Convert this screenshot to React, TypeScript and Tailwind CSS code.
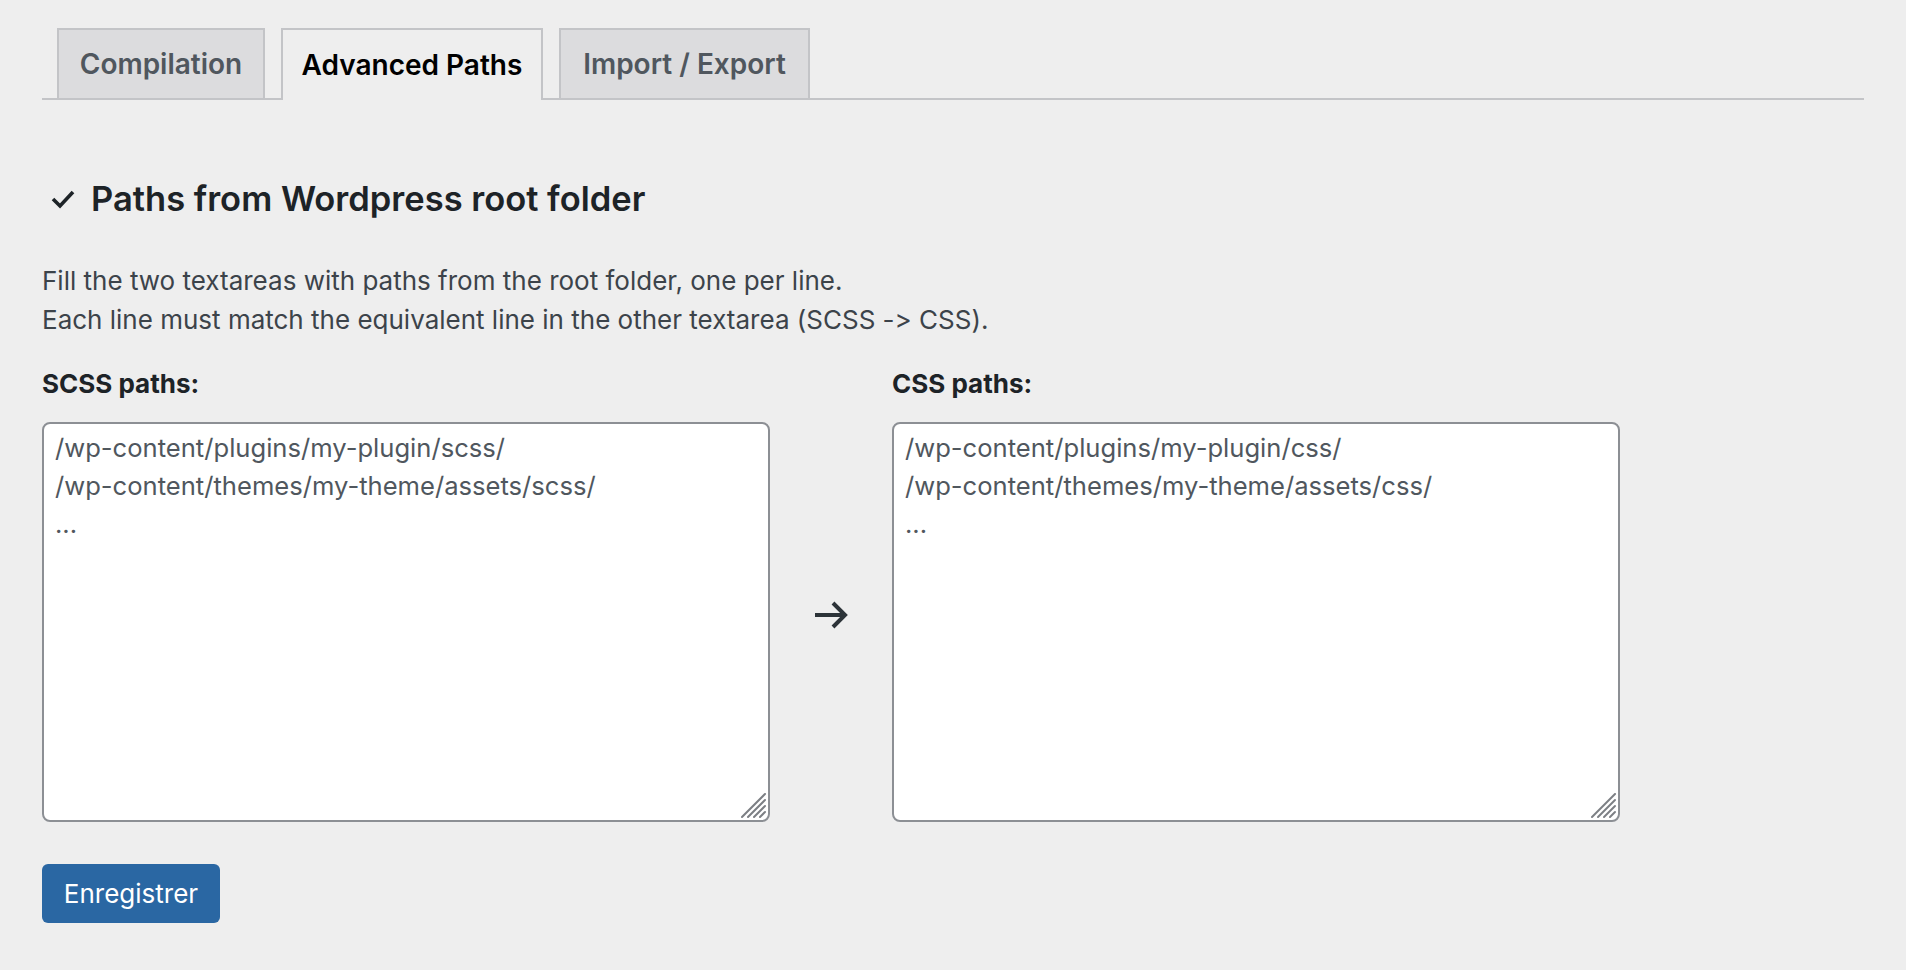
import React from "react";

const tabs = [
  { label: "Compilation", className: "w-[208px]", active: false },
  { label: "Advanced Paths", className: "w-[262px]", active: true },
  { label: "Import / Export", className: "w-[251px]", active: false },
];

const scssPlaceholder =
  "/wp-content/plugins/my-plugin/scss/\n/wp-content/themes/my-theme/assets/scss/\n...";
const cssPlaceholder =
  "/wp-content/plugins/my-plugin/css/\n/wp-content/themes/my-theme/assets/css/\n...";

const Grip = () => (
  <svg
    className="pointer-events-none absolute right-[3px] bottom-[3px]"
    width="26"
    height="26"
    viewBox="0 0 26 26"
    fill="none"
    stroke="#7c7f84"
    strokeWidth="2"
    strokeLinecap="round"
  >
    <line x1="1" y1="24" x2="24" y2="1" />
    <line x1="7" y1="24" x2="24" y2="7" />
    <line x1="13" y1="24" x2="24" y2="13" />
    <line x1="19" y1="24" x2="24" y2="19" />
  </svg>
);

const PathBox = ({ label, placeholder }: { label: string; placeholder: string }) => (
  <div className="flex flex-col">
    <label className="h-[39px] leading-[39px] text-[26px] font-bold text-[#1d2327]">{label}</label>
    <div className="relative mt-[19px] w-[728px] h-[400px]">
      <textarea
        placeholder={placeholder}
        className="w-full h-full resize-none rounded-[8px] border-2 border-[#8c8f94] bg-white px-[11px] py-[5px] text-[25.6px] leading-[38px] text-[#2c3338] placeholder:text-[#50575e] outline-none"
      />
      <Grip />
    </div>
  </div>
);

export default function App() {
  return (
    <div className="min-h-screen w-full bg-[#eeeeee] px-[42px] pt-[28px] font-[family-name:Inter,sans-serif] [font-feature-settings:'calt'_0] text-[#3c434a]">
      <nav className="flex items-end gap-[16px] pl-[15px] border-b-2 border-[#c3c4c7]">
        {tabs.map((tab) => (
          <div
            key={tab.label}
            className={
              tab.active
                ? `${tab.className} h-[72px] -mb-[2px] flex items-center justify-center border-2 border-b-0 border-[#c3c4c7] bg-[#eeeeee] text-[28px] font-semibold text-black`
                : `${tab.className} h-[70px] flex items-center justify-center border-2 border-b-0 border-[#c3c4c7] bg-[#dcdcde] text-[28px] font-semibold text-[#50575e]`
            }
          >
            {tab.label}
          </div>
        ))}
      </nav>

      <h2 className="mt-[75px] flex h-[48px] items-center text-[34.5px] font-semibold text-[#1d2327]">
        <svg className="ml-[9px] mr-[16px]" width="24" height="20" viewBox="0 0 24 20" fill="none">
          <polyline points="2,10 9,17 22,3" stroke="#1d2327" strokeWidth="3.6" />
        </svg>
        Paths from Wordpress root folder
      </h2>

      <div className="mt-[38px] text-[26px] leading-[39px]">
        <p>Fill the two textareas with paths from the root folder, one per line.</p>
        <p>Each line must match the equivalent line in the other textarea (SCSS -&gt; CSS).</p>
      </div>

      <div className="mt-[25px] flex items-start">
        <PathBox label="SCSS paths:" placeholder={scssPlaceholder} />
        <div className="flex w-[122px] self-stretch items-center justify-center pt-[44px]">
          <svg width="34" height="28" viewBox="0 0 34 28" fill="none" stroke="#2c3338" strokeWidth="4">
            <line x1="1" y1="14" x2="31" y2="14" />
            <polyline points="19,2 31,14 19,26" />
          </svg>
        </div>
        <PathBox label="CSS paths:" placeholder={cssPlaceholder} />
      </div>

      <button className="mt-[42px] h-[59px] w-[178px] rounded-[6px] bg-[#2a67a3] text-[26px] text-white">
        Enregistrer
      </button>
    </div>
  );
}
